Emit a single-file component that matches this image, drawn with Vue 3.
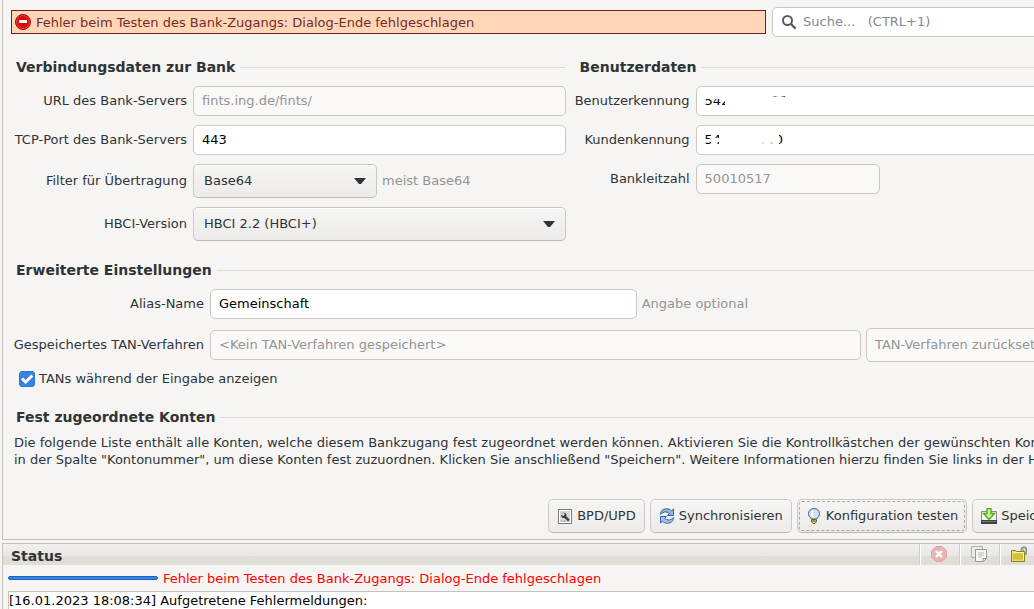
<script setup>
import { ref } from 'vue'

const port = ref('443')
const filter = ref('Base64')
const version = ref('HBCI 2.2 (HBCI+)')
const alias = ref('Gemeinschaft')
const showTans = ref(true)
const log = ref('[16.01.2023 18:08:34] Aufgetretene Fehlermeldungen:')
const userId = ref('542' + '\u00a0'.repeat(10) + '00')
const customerId = ref('54' + '\u00a0'.repeat(13) + '0')
</script>

<template>
  <div class="window">
    <main class="panel">
      <header class="top">
        <div class="alert" role="alert">
          <svg width="16" height="16" viewBox="0 0 16 16" aria-hidden="true">
            <circle cx="8" cy="8" r="7.5" fill="#d40a0a" stroke="#a90000" />
            <circle cx="8" cy="8" r="6.4" fill="none" stroke="#ee4a4a" />
            <rect x="4" y="6" width="8" height="3" fill="#fff" />
          </svg>
          <span>Fehler beim Testen des Bank-Zugangs: Dialog-Ende fehlgeschlagen</span>
        </div>
        <div class="search">
          <svg width="16" height="16" viewBox="0 0 16 16" aria-hidden="true">
            <circle cx="6.5" cy="6.5" r="4.5" fill="none" stroke="#565b5c" stroke-width="2" />
            <path d="M10 10l4.6 4.6" stroke="#565b5c" stroke-width="2.4" />
          </svg>
          <input type="text" aria-label="Suche" placeholder="Suche...   (CTRL+1)" />
        </div>
      </header>

      <div class="columns">
        <section>
          <h2>Verbindungsdaten zur Bank</h2>
          <div class="form connection">
            <label for="url">URL des Bank-Servers</label>
            <input id="url" type="text" value="fints.ing.de/fints/" disabled />
            <label for="port">TCP-Port des Bank-Servers</label>
            <input id="port" v-model="port" type="text" />
            <label for="filter">Filter für Übertragung</label>
            <div class="row">
              <div class="select short">
                <select id="filter" v-model="filter"><option>Base64</option></select>
                <svg width="12" height="6" viewBox="0 0 12 6" aria-hidden="true"><path d="M0 0h12L7 6H5z" fill="#2e3436" /></svg>
              </div>
              <span class="hint">meist Base64</span>
            </div>
            <label for="version">HBCI-Version</label>
            <div class="select">
              <select id="version" v-model="version"><option>HBCI 2.2 (HBCI+)</option></select>
              <svg width="12" height="6" viewBox="0 0 12 6" aria-hidden="true"><path d="M0 0h12L7 6H5z" fill="#2e3436" /></svg>
            </div>
          </div>
        </section>

        <section>
          <h2>Benutzerdaten</h2>
          <div class="form user">
            <label for="user">Benutzerkennung</label>
            <div class="masked">
              <input id="user" v-model="userId" type="text" />
              <svg width="86" height="18" viewBox="0 0 86 18" aria-hidden="true">
                <path d="M0 0h26v8H0zM23 6h63v12H23zM23 0h43v7H23z" fill="#fff" />
                <path d="M66 0h16v6H66z" fill="#fff" fill-opacity=".5" />
              </svg>
            </div>
            <label for="customer">Kundenkennung</label>
            <div class="masked">
              <input id="customer" v-model="customerId" type="text" />
              <svg width="86" height="18" viewBox="0 0 86 18" aria-hidden="true">
                <path d="M0 9h9v3H0zM9 0h3v18H9zM12 8h62v4H12zM17 0h60v18H17z" fill="#fff" />
                <path d="M60 13h2M68 13h3" stroke="#b9b9b9" />
              </svg>
            </div>
            <label for="blz">Bankleitzahl</label>
            <input id="blz" class="short" type="text" value="50010517" disabled />
          </div>
        </section>
      </div>

      <section>
        <h2>Erweiterte Einstellungen</h2>
        <div class="form extended">
          <label for="alias">Alias-Name</label>
          <div class="row">
            <input id="alias" v-model="alias" class="alias" type="text" />
            <label class="hint alias-hint" for="alias">Angabe optional</label>
          </div>
          <label for="tan">Gespeichertes TAN-Verfahren</label>
          <div class="row">
            <input id="tan" type="text" value="&lt;Kein TAN-Verfahren gespeichert&gt;" disabled />
            <button class="reset" type="button" disabled>TAN-Verfahren zurücksetzen</button>
          </div>
        </div>
        <label class="check">
          <input v-model="showTans" type="checkbox" />
          <span>TANs während der Eingabe anzeigen</span>
          <svg width="16" height="16" viewBox="0 0 16 16" aria-hidden="true"><path d="M3 7.500l3.600 3.500L13.300 4.500" fill="none" stroke="#fff" stroke-width="3" /></svg>
        </label>
      </section>

      <section>
        <h2>Fest zugeordnete Konten</h2>
        <p>Die folgende Liste enthält alle Konten, welche diesem Bankzugang fest zugeordnet werden können. Aktivieren Sie die Kontrollkästchen der gewünschten Konten<br />in der Spalte "Kontonummer", um diese Konten fest zuzuordnen. Klicken Sie anschließend "Speichern". Weitere Informationen hierzu finden Sie links in der Hilfe.</p>
      </section>

      <footer class="actions">
        <button type="button">
          <svg width="16" height="16" viewBox="0 0 16 16" aria-hidden="true">
            <rect x="1.500" y="1.500" width="13" height="14" fill="#fff" stroke="#777" />
            <rect x="3" y="3" width="10" height="11" fill="#d8d8d8" />
            <path d="M4 5h4M4 13h5" stroke="#aaa" />
            <path d="M7 8l5 4.500" stroke="#444" stroke-width="2.400" />
            <path d="M4 7a3 3 0 0 0 3 3 3 3 0 0 0 2-4.500L7 5l1 2-1.500 1z" fill="#333" />
          </svg>
          BPD/UPD
        </button>
        <button type="button">
          <svg width="16" height="16" viewBox="0 0 16 16" aria-hidden="true">
            <path d="M1.500 6.500C1.500 3 4 .8 7.500.8c2.200 0 3.800.7 5 2l2-1.800v6.500H8.500l2-2C8.500 3.800 5.500 3.500 4 4.500c-1 .5-1.500 1.200-2.500 2z" fill="#8fb3dc" stroke="#2f61a5" />
            <path d="M14.500 9.500c0 3.500-2.500 5.700-6 5.700-2.200 0-3.800-.7-5-2L1.500 15V8.500h6l-2 2c2 1.700 5 2 6.500 1 1-.5 1.500-1.200 2.500-2z" fill="#a9c5e6" stroke="#2f61a5" />
          </svg>
          Synchronisieren
        </button>
        <button class="focused" type="button">
          <svg width="16" height="16" viewBox="0 0 16 16" aria-hidden="true">
            <path d="M5.500 11C4.500 9.500 2.500 8.500 2.500 5.500a5.500 5 0 0 1 11 0c0 3-2 4-3 5.500z" fill="#cfe0fa" stroke="#465a82" />
            <path d="M5 6c0-2 1-3 3-3-1 2-1 4 0 6-2 0-3-1-3-3z" fill="#fff" />
            <path d="M5.500 11.500h5v2l-1.500 2H7l-1.500-2z" fill="#e9db69" stroke="#6b6227" />
            <path d="M5.500 13h5" stroke="#6b6227" />
          </svg>
          Konfiguration testen
        </button>
        <button type="button">
          <svg width="16" height="16" viewBox="0 0 16 16" aria-hidden="true">
            <path d="M.5 3.500h15v9H.5z" fill="#f4f4f2" stroke="#888" />
            <path d="M0 12h16v4H0z" fill="#3e4142" />
            <path d="M1 13.500h14" stroke="#777" />
            <path d="M6 .5h4v5h3.500L8 11.500 2.500 5.500H6z" fill="#c7f29b" stroke="#4ea80b" stroke-width="1.300" />
          </svg>
          Speichern
        </button>
      </footer>
    </main>

    <section class="status">
      <header>
        <h2>Status</h2>
        <div class="tools">
          <button type="button" aria-label="Abbrechen">
            <svg width="16" height="16" viewBox="0 0 16 16" aria-hidden="true">
              <path d="M5 .5h6L15.500 5v6L11 15.500H5L.5 11V5z" fill="#e7b4b3" stroke="#dba09f" />
              <path d="M5 5l6 6M11 5l-6 6" stroke="#fff" stroke-width="2.400" />
            </svg>
          </button>
          <button type="button" aria-label="Kopieren">
            <svg width="16" height="16" viewBox="0 0 16 16" aria-hidden="true">
              <path d="M.5.5h11v11H.5z" fill="#ecebe9" stroke="#b0b0ad" />
              <path d="M4.500 3.500h11v9l-3 3h-8z" fill="#f5f5f4" stroke="#989a96" />
              <path d="M7 7h6M7 9h6M7 11h4" stroke="#bbb" />
              <path d="M12 15.500v-3h3.500" fill="none" stroke="#888" />
            </svg>
          </button>
          <button type="button" aria-label="Entsperren">
            <svg width="16" height="16" viewBox="0 0 16 16" aria-hidden="true">
              <path d="M10.500 6V3a2.500 2.500 0 0 1 4.800 0v6" fill="none" stroke="#8f918e" stroke-width="2" />
              <path d="M12.500 3.500v4.500" stroke="#999" />
              <path d="M.5 4.500h4l1 1h8v10H.5z" fill="#e6db75" stroke="#92830d" />
              <path d="M2 7.500h10v6H2z" fill="#cfc03c" />
              <path d="M1.500 6.500h11v8" fill="none" stroke="#f7f1aa" />
            </svg>
          </button>
        </div>
      </header>
      <div class="progress">
        <div class="bar" role="progressbar" aria-label="Fortschritt" aria-valuenow="100"></div>
        <span>Fehler beim Testen des Bank-Zugangs: Dialog-Ende fehlgeschlagen</span>
      </div>
      <textarea v-model="log" aria-label="Protokoll" rows="1" readonly></textarea>
    </section>
  </div>
</template>

<style>
body {
  background: #f6f5f4;
}

#app {
  overflow: hidden;
}
</style>

<style scoped>
* {
  box-sizing: border-box;
}

/* The window continues past the right edge of the screen. */
.window {
  display: flex;
  flex-direction: column;
  gap: 3px;
  width: calc(100% + 56px);
  height: 100vh;
  padding-left: 2px;
  color: #2e3436;
  font-family: "DejaVu Sans", sans-serif;
  font-size: 13px;
  line-height: 17px;
  white-space: nowrap;
}

.panel {
  display: flex;
  flex: 1;
  flex-direction: column;
  min-height: 0;
  padding: 7px 6px 6px 8px;
  border: 1px solid #c5c1bb;
  border-top: 0;
}

svg {
  flex: none;
}

.top {
  display: grid;
  grid-template-columns: 17fr 7fr;
  align-items: center;
  gap: 6px;
  padding-bottom: 1px;
}

.alert {
  display: flex;
  align-items: center;
  gap: 5px;
  height: 24px;
  padding: 0 3px;
  border: 1px solid #6e2020;
  background: #ffd7b8;
  color: #752a2a;
}

.search {
  display: flex;
  align-items: center;
  gap: 6px;
  height: 30px;
  padding-left: 8px;
  border: 1px solid #cdc7c2;
  border-radius: 5px;
  background: #fff;
}

.search input {
  height: 28px;
  padding: 0 0 2px;
  border: 0;
  background: transparent;
}

.search input::placeholder {
  color: #85888a;
  opacity: 1;
  white-space: pre;
}

.columns {
  display: grid;
  grid-template-columns: 12fr 11fr;
  gap: 9px;
}

h2 {
  display: flex;
  align-items: center;
  gap: 5px;
  margin: 20px 0 10px;
  padding-left: 5px;
  font-size: 14px;
  font-weight: bold;
  line-height: 18px;
}

.panel h2 {
  padding-right: 1px;
}

.panel h2::after {
  flex: 1;
  height: 1px;
  background: #dcdad7;
  content: "";
}

.form {
  display: grid;
  align-items: center;
  gap: 9px 6px;
}

.form label,
.hint {
  padding-bottom: 2px;
}

.form > label {
  text-align: right;
}

.connection {
  grid-template-columns: 176px 1fr;
}

.user {
  grid-template-columns: 115px 1fr;
  align-content: start;
}

.extended {
  grid-template-columns: 193px 1fr;
}

input,
select,
button,
textarea {
  margin: 0;
  font: inherit;
}

input[type="text"] {
  width: 100%;
  min-width: 0;
}

.form input {
  height: 30px;
  padding: 0 8px 2px;
  border: 1px solid #cdc7c2;
  border-radius: 5px;
  background: #fff;
  color: #000;
}

.form input:disabled {
  background: #faf9f8;
  color: #929595;
}

.form input.short,
.select.short {
  width: 184px;
}

.row {
  display: flex;
  align-items: center;
  gap: 5px;
}

.hint {
  color: #929595;
}

.row .alias {
  flex: 50;
}

.alias-hint {
  flex: 54;
}

.select,
.masked {
  position: relative;
}

.select select {
  display: block;
  width: 100%;
  height: 34px;
  padding: 0 30px 2px 10px;
  border: 1px solid #cdc7c2;
  border-bottom-color: #bfb8b1;
  border-radius: 5px;
  background: linear-gradient(#f6f5f4, #edebe9);
  box-shadow: inset 0 1px #fff;
  color: #2e3436;
  appearance: none;
}

.select svg {
  position: absolute;
  top: 14px;
  right: 11px;
  pointer-events: none;
}

.masked input {
  display: block;
}

.masked svg {
  position: absolute;
  top: 5px;
  left: 6px;
}

button {
  display: flex;
  align-items: center;
  gap: 4px;
  height: 34px;
  padding: 0 8px 2px;
  border: 1px solid #cdc7c2;
  border-bottom-color: #bfb8b1;
  border-radius: 5px;
  background: linear-gradient(#f6f5f4, #edebe9);
  box-shadow: inset 0 1px #fff;
  color: #2e3436;
}

.reset {
  flex: 0 0 217px;
  border-color: #cdc7c2;
  background: #faf9f8;
  box-shadow: none;
  color: #929595;
}

.check {
  display: flex;
  position: relative;
  align-items: flex-start;
  gap: 4px;
  height: 17px;
  margin-top: 9px;
  padding-left: 8px;
  line-height: 16px;
}

.check input {
  width: 16px;
  height: 16px;
  border: 1px solid #2c78d6;
  border-radius: 3px;
  background: #3584e4;
  appearance: none;
}

.check input:not(:checked) {
  background: #fff;
}

.check svg {
  position: absolute;
  left: 8px;
  pointer-events: none;
}

p {
  margin: -2px 0 0 3px;
}

.actions {
  display: flex;
  justify-content: flex-end;
  gap: 5px;
  margin-top: auto;
  padding-right: 8px;
}

.actions svg {
  margin-top: 2px;
}

.focused {
  outline: 1px dashed #aaa8a6;
  outline-offset: -3px;
}

.status {
  flex: none;
  height: 66px;
  border: 1px solid #c5c1bb;
  border-bottom: 0;
}

.status header {
  display: flex;
  justify-content: space-between;
  height: 21px;
  background: linear-gradient(#f2f0ef, #e9e6e3 55%, #e1ded9 55%);
}

.status h2 {
  margin: 2px 0 0;
  padding-left: 8px;
}

.tools {
  display: flex;
  width: 169px;
}

.tools button {
  justify-content: center;
  width: 40px;
  height: 21px;
  padding: 0 3px 1px 0;
  border: 0;
  border-left: 1px solid #fff;
  border-radius: 0;
  background: transparent;
  box-shadow: -1px 0 #d2cec9;
}

.progress {
  display: flex;
  align-items: center;
  gap: 5px;
  height: 26px;
  padding-left: 5px;
  color: #f00;
}

.bar {
  width: 150px;
  height: 4px;
  border: 1px solid #1b62b8;
  border-radius: 2px;
  background: #3584e4;
}

textarea {
  display: block;
  width: calc(100% - 5px);
  height: 18px;
  margin-left: 5px;
  padding: 0;
  border: 1px solid #c5c1bb;
  border-width: 1px 0 0 1px;
  background: #fff;
  color: #000;
  overflow: hidden;
  resize: none;
}
</style>
